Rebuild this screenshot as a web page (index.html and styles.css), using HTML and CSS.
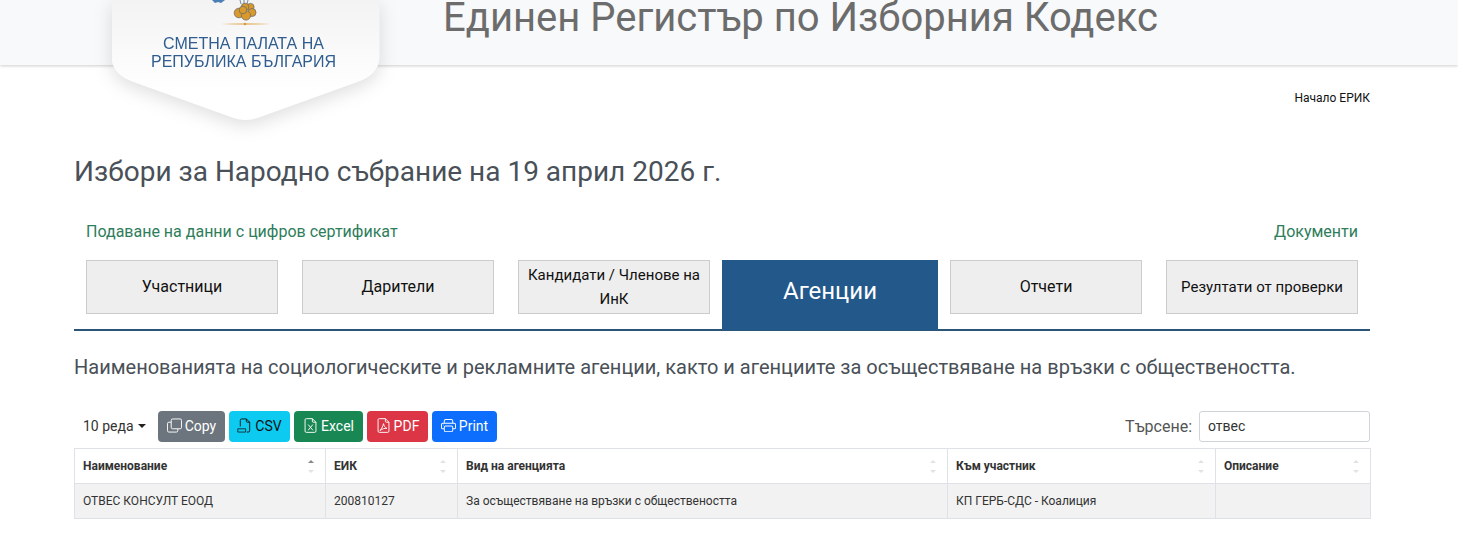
FILE: index.html
```html
<!DOCTYPE html>
<html lang="bg">
<head>
<meta charset="utf-8">
<title>Единен Регистър по Изборния Кодекс</title>
<link rel="stylesheet" href="styles.css">
</head>
<body>
<header class="topbar">
  <div class="wrap topbar-inner">
    <div class="crest-shadow">
      <div class="crest">
        <svg class="crest-art" viewBox="0 0 80 30" width="80" height="30" aria-hidden="true">
          <path d="M6 0 L9 3 L12 2 L15 3 L19 0Z" fill="#4c7fb5"/>
          <path d="M34 0 L35 4 M38 0 L38 4 M42 0 L41 4" stroke="#55708c" stroke-width=".8" fill="none"/>
          <g fill="#d9992b" stroke="#6d6f6a" stroke-width=".8">
            <circle cx="44.500" cy="7" r="3.600"/><circle cx="39" cy="7" r="3.800"/><circle cx="46" cy="12.500" r="4"/><circle cx="33" cy="13" r="4.800"/><circle cx="40" cy="15.500" r="4.600"/><circle cx="37" cy="10" r="3.800"/>
          </g>
          <path d="M15 24 Q40 22.600 65 24 Q40 25.400 15 24Z" fill="#e3b66e"/>
          <circle cx="39" cy="24" r="1.300" fill="#dd9a3a"/>
        </svg>
        <div class="crest-text">СМЕТНА ПАЛАТА НА<br>РЕПУБЛИКА БЪЛГАРИЯ</div>
      </div>
    </div>
    <div class="site-title">Единен Регистър по Изборния Кодекс</div>
  </div>
</header>
<main class="wrap">
  <nav class="crumb"><a>Начало ЕРИК</a></nav>
  <h1 class="election">Избори за Народно събрание на 19 април 2026 г.</h1>
  <div class="links"><a>Подаване на данни с цифров сертификат</a><a>Документи</a></div>
  <div class="tabs">
    <a class="tab">Участници</a>
    <a class="tab">Дарители</a>
    <a class="tab tab-small">Кандидати / Членове на ИнК</a>
    <a class="tab tab-active">Агенции</a>
    <a class="tab">Отчети</a>
    <a class="tab tab-small">Резултати от проверки</a>
  </div>
  <p class="lead">Наименованията на социологическите и рекламните агенции, както и агенциите за осъществяване на връзки с обществеността.</p>
  <div class="toolbar">
    <div class="tools">
      <span class="length">10 реда<i class="caret"></i></span>
      <button class="btn b-gray"><svg viewBox="0 0 16 16" class="ic"><path d="M6 1h8a1.500 1.500 0 0 1 1.500 1.500v7.500a1.500 1.500 0 0 1-1.500 1.500H6A1.500 1.500 0 0 1 4.500 10V2.500A1.500 1.500 0 0 1 6 1Z M4.500 4.500H2A1.500 1.500 0 0 0 .5 6v7.500A1.500 1.500 0 0 0 2 15h8a1.500 1.500 0 0 0 1.500-1.500v-2"/></svg>Copy</button>
      <button class="btn b-cyan"><svg viewBox="0 0 16 16" class="ic"><path d="M3.500 9V2.500A1.500 1.500 0 0 1 5 1h5l3.500 3.500v9a1.500 1.500 0 0 1-1.500 1.500h-1.500 M10 1v2.500a1 1 0 0 0 1 1h2.500"/><path d="M.8 11.500h8.400v3.500H.8Z" stroke-width=".8"/></svg>CSV</button>
      <button class="btn b-green"><svg viewBox="0 0 16 16" class="ic"><path d="M4 .7h6L13.800 4.500V14a1.300 1.300 0 0 1-1.300 1.300h-9A1.300 1.300 0 0 1 2.200 14V2A1.300 1.300 0 0 1 3.500.7Z M10 .7v2.800a1 1 0 0 0 1 1h2.800 M5.500 7l5 6 M10.500 7l-5 6"/></svg>Excel</button>
      <button class="btn b-red"><svg viewBox="0 0 16 16" class="ic"><path d="M4 .7h6L13.800 4.500V14a1.300 1.300 0 0 1-1.300 1.300h-9A1.300 1.300 0 0 1 2.200 14V2A1.300 1.300 0 0 1 3.500.7Z M10 .7v2.800a1 1 0 0 0 1 1h2.800 M8 6c-.5 2.500-1.800 5-3.800 7.500 2.500-2 5-2.800 7.500-2.300C9.500 10 8.500 8.500 8 6Z"/></svg>PDF</button>
      <button class="btn b-blue"><svg viewBox="0 0 16 16" class="ic ic-fill"><path d="M2.500 8a.5.5 0 1 0 0-1 .5.5 0 0 0 0 1"/><path d="M5 1a2 2 0 0 0-2 2v2H2a2 2 0 0 0-2 2v3a2 2 0 0 0 2 2h1v1a2 2 0 0 0 2 2h6a2 2 0 0 0 2-2v-1h1a2 2 0 0 0 2-2V7a2 2 0 0 0-2-2h-1V3a2 2 0 0 0-2-2zM4 3a1 1 0 0 1 1-1h6a1 1 0 0 1 1 1v2H4zm1 5a2 2 0 0 0-2 2v1H2a1 1 0 0 1-1-1V7a1 1 0 0 1 1-1h12a1 1 0 0 1 1 1v3a1 1 0 0 1-1 1h-1v-1a2 2 0 0 0-2-2zm7 2v3a1 1 0 0 1-1 1H5a1 1 0 0 1-1-1v-3a1 1 0 0 1 1-1h6a1 1 0 0 1 1 1"/></svg>Print</button>
    </div>
    <label class="search">Търсене:<input class="search-input" type="text" value="отвес"></label>
  </div>
  <div class="table-box">
    <table class="grid">
      <colgroup><col class="c1"><col class="c2"><col class="c3"><col class="c4"><col class="c5"></colgroup>
      <thead>
        <tr>
          <th>Наименование<span class="sort up"></span></th>
          <th>ЕИК<span class="sort"></span></th>
          <th>Вид на агенцията<span class="sort"></span></th>
          <th>Към участник<span class="sort"></span></th>
          <th>Описание<span class="sort"></span></th>
        </tr>
      </thead>
      <tbody>
        <tr>
          <td>ОТВЕС КОНСУЛТ ЕООД</td>
          <td>200810127</td>
          <td>За осъществяване на връзки с обществеността</td>
          <td>КП ГЕРБ-СДС - Коалиция</td>
          <td></td>
        </tr>
      </tbody>
    </table>
  </div>
</main>
</body>
</html>
```
FILE: styles.css
```css
* { box-sizing: border-box; }
html, body { margin: 0; padding: 0; }
body { font-family: Roboto, "Liberation Sans", sans-serif; color: #212529; background: #fff; overflow: hidden; height: 536px; }
a { text-decoration: none; color: inherit; }
.wrap { width: 1296px; margin-left: 74px; }
.topbar { height: 65px; background: #f8f9fa; box-shadow: 0 1px 3px rgba(0,0,0,.2); }
.topbar-inner { display: flex; height: 65px; }
.crest-shadow { position: relative; z-index: 2; width: 268px; height: 123px; margin-left: 37.500px; flex: none; filter: drop-shadow(0 5px 9px rgba(0,0,0,.13)); }
.crest {
  width: 268px; height: 123px;
  background: linear-gradient(#f3f3f4 0, #fff 75%);
  display: flex; flex-direction: column; align-items: center;
  clip-path: path("M0 0H268V57C268 70 258 78 246 82L146 118Q134 122 122 118L22 82C10 78 0 70 0 57Z");
}
.crest-art { display: block; flex: none; }
.crest-text { margin-top: 5px; padding-right: 4px; font: 16px/18px "Liberation Sans", Arial, sans-serif; text-align: center; color: #2f5d8f; white-space: nowrap; }
.site-title { margin-left: 63.500px; font-size: 40px; line-height: 36px; color: #6c6c6c; white-space: nowrap; }
.crumb { display: flex; justify-content: flex-end; font-size: 12px; line-height: 14px; color: #111; margin-top: 26px; }
.election { margin: 50px 0 0; font-size: 28px; font-weight: 400; line-height: 34px; color: #495057; }
.links { display: flex; justify-content: space-between; padding: 0 12px; margin-top: 33px; font-size: 16px; line-height: 19px; color: #2e7d5b; }
.tabs { display: flex; gap: 24px; align-items: flex-start; margin-top: 19px; padding: 0 12px; height: 71px; border-bottom: 2px solid #2a5578; }
.tab { width: 192px; height: 54px; background: #eee; border: 1px solid #ccc; display: flex; align-items: center; justify-content: center; text-align: center; font-size: 16px; line-height: 24px; color: #111; }
.tab-small { font-size: 15px; padding: 0 8px; }
.tab-active { width: 216px; height: 70px; margin: 0 -12px; padding-bottom: 8px; background: #23588b; border: 0; color: #fff; font-size: 24px; }
.lead { margin: 23px 0 0; font-size: 20px; line-height: 26px; color: #495057; }
.toolbar { display: flex; justify-content: space-between; align-items: center; margin-top: 31px; height: 31px; }
.tools { display: flex; align-items: center; gap: 4px; }
.length { width: 80px; padding-left: 9px; padding-bottom: 1px; font-size: 14px; color: #333; display: flex; align-items: center; }
.caret { width: 0; height: 0; border: 4.200px solid transparent; border-top-color: #222; border-bottom: 0; margin-left: 4px; }
.btn { height: 31px; border: 0; border-radius: 4px; padding: 0 0 2px; font: 14px Roboto, sans-serif; color: #fff; display: flex; align-items: center; justify-content: center; gap: 3px; }
.ic { width: 15px; height: 15px; fill: none; stroke: currentColor; stroke-width: 1; flex: none; }
.ic-fill { fill: currentColor; stroke: none; }
.b-gray { background: #6c757d; width: 67px; }
.b-cyan { background: #0dcaf0; color: #111; width: 61px; }
.b-green { background: #198754; width: 69px; }
.b-red { background: #dc3545; width: 61px; }
.b-blue { background: #0d6efd; width: 65px; }
.search { display: flex; align-items: center; gap: 7px; font-size: 16px; color: #555; }
.search-input { width: 171px; height: 31px; border: 1px solid #ced4da; border-radius: 3px; padding: 0 8px 2px; font: 14px Roboto, sans-serif; color: #333; outline: 0; }
.table-box { margin-top: 6px; }
.grid { width: 1296px; border-collapse: collapse; table-layout: fixed; font-size: 12px; color: #333; }
.c1 { width: 251px; } .c2 { width: 132px; } .c3 { width: 490px; } .c4 { width: 268px; } .c5 { width: 155px; }
.grid th, .grid td { border: 1px solid #dee2e6; height: 35px; padding: 0 8px; text-align: left; position: relative; }
.grid th { font-weight: 700; color: #333; }
.grid td { background: #f2f2f2; }
.sort { position: absolute; right: 11px; top: 11px; width: 6px; height: 13px; }
.sort::before, .sort::after { content: ""; position: absolute; left: 0; border: 3px solid transparent; }
.sort::before { top: 0; border-bottom-color: #e2e2e2; border-top: 0; }
.sort::after { bottom: 0; border-top-color: #e2e2e2; border-bottom: 0; }
.sort.up::before { border-bottom-color: #888; }
```
